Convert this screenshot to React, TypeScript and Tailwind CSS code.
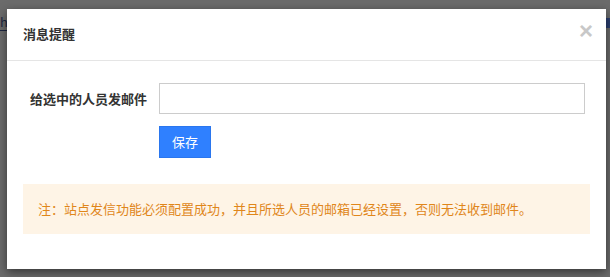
const cjk = { fontFamily: '"Noto Sans CJK SC", "Liberation Sans", sans-serif' };

const App = () => {
  return (
    <div className="w-[610px] h-[277px] bg-[#6b6b6b] relative overflow-hidden" style={cjk}>
      {/* page behind the overlay */}
      <div className="absolute left-0 top-[14px] text-[13px] text-[#1c2540] border-b border-[#1c2540] leading-[16px]">h</div>
      <div className="absolute right-0 top-[18px] w-[4px] h-[10px] bg-[#2b3f70]" />

      <div className="absolute left-[7px] top-[9px] w-[599px] h-[260px] bg-white shadow-[0_3px_9px_rgba(0,0,0,0.5)] flex flex-col">
        <div className="h-[52px] border-b border-[#e5e5e5] flex items-center justify-between pl-[16px] pr-[13px]">
          <h3 className="text-[13px] font-bold text-[#333] -mt-[1px]">消息提醒</h3>
          <span className="text-[#c8c8c8] text-[24px] font-bold leading-none -mt-[7px] font-['Liberation_Sans',sans-serif]">×</span>
        </div>

        <div className="pt-[22px] px-[16px]">
          <div className="flex items-center">
            <label className="w-[136px] text-right pr-[12px] text-[13px] font-bold text-[#333]">给选中的人员发邮件</label>
            <input className="w-[426px] h-[31px] border border-[#ccc] outline-none" />
          </div>
          <div className="pl-[136px] mt-[12px]">
            <button className="w-[52px] h-[32px] bg-[#2f80ff] border border-[#2a76ee] text-white text-[13px]">保存</button>
          </div>
          <div className="mt-[26px] h-[50px] bg-[#fef4e6] flex items-center pl-[15px] text-[13px] text-[#e0861a]">
            注：站点发信功能必须配置成功，并且所选人员的邮箱已经设置，否则无法收到邮件。
          </div>
        </div>
      </div>
    </div>
  );
};

export default App;
